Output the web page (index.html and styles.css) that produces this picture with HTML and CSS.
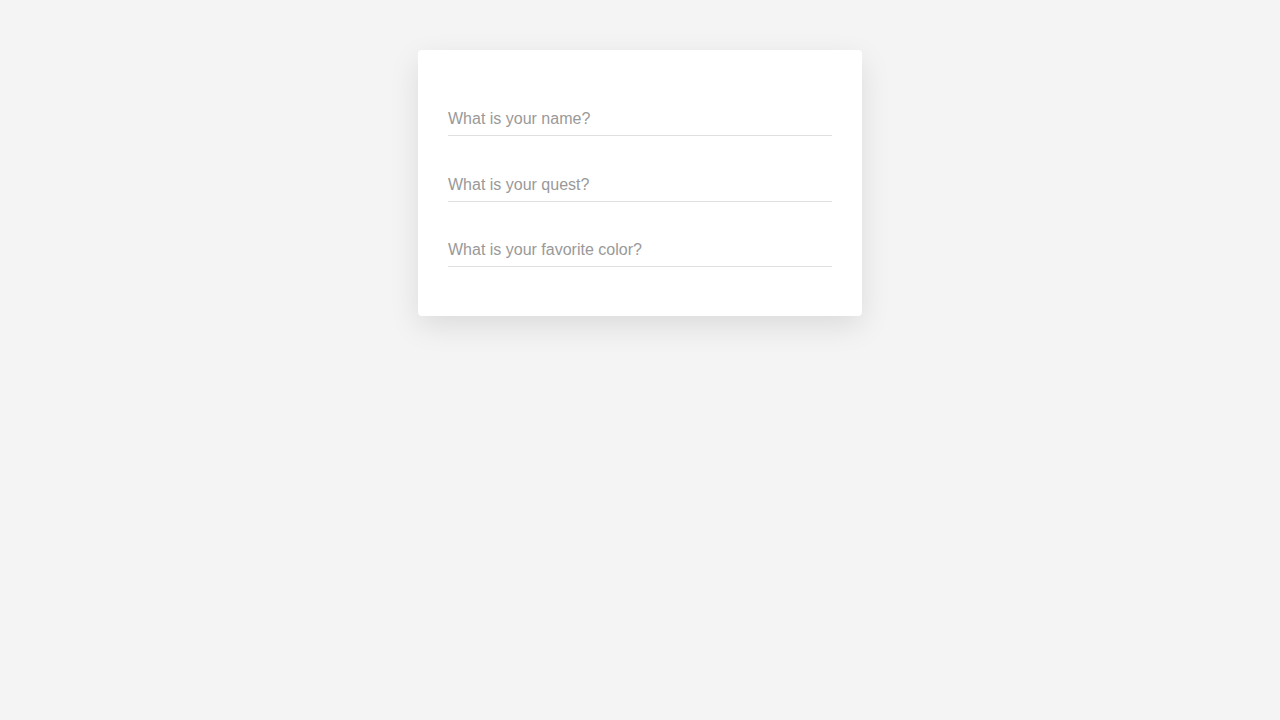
FILE: index.html
```html
<!DOCTYPE html>
<html lang="en">
<head>
<meta charset="utf-8">
<title>Questions</title>
<link rel="stylesheet" href="styles.css">
</head>
<body>
<main class="page">
  <form class="card">
    <input class="field" type="text" placeholder="What is your name?">
    <input class="field" type="text" placeholder="What is your quest?">
    <input class="field" type="text" placeholder="What is your favorite color?">
  </form>
</main>
</body>
</html>
```
FILE: styles.css
```css
html, body {
  margin: 0;
  padding: 0;
  background: #f4f4f4;
  font-family: "Liberation Sans", Arial, sans-serif;
}
body {
  min-height: 100vh;
}
.page {
  display: flex;
  justify-content: center;
  align-items: flex-start;
  padding-top: 50px;
  min-height: 100vh;
  box-sizing: border-box;
}
.card {
  width: 384px;
  padding: 50px 30px 49px;
  background: #fff;
  border-radius: 4px;
  box-shadow: 0 10px 30px rgba(0, 0, 0, 0.1);
  display: flex;
  flex-direction: column;
  gap: 29.5px;
}
.field {
  display: block;
  width: 100%;
  box-sizing: border-box;
  margin: 0;
  padding: 9px 0 7px;
  border: 0;
  border-bottom: 1px solid #e0e0e0;
  outline: none;
  background: transparent;
  font-family: "Liberation Sans", Arial, sans-serif;
  font-size: 16px;
  line-height: 19px;
  color: #333;
}
.field::placeholder {
  color: #999;
  opacity: 1;
}
```
